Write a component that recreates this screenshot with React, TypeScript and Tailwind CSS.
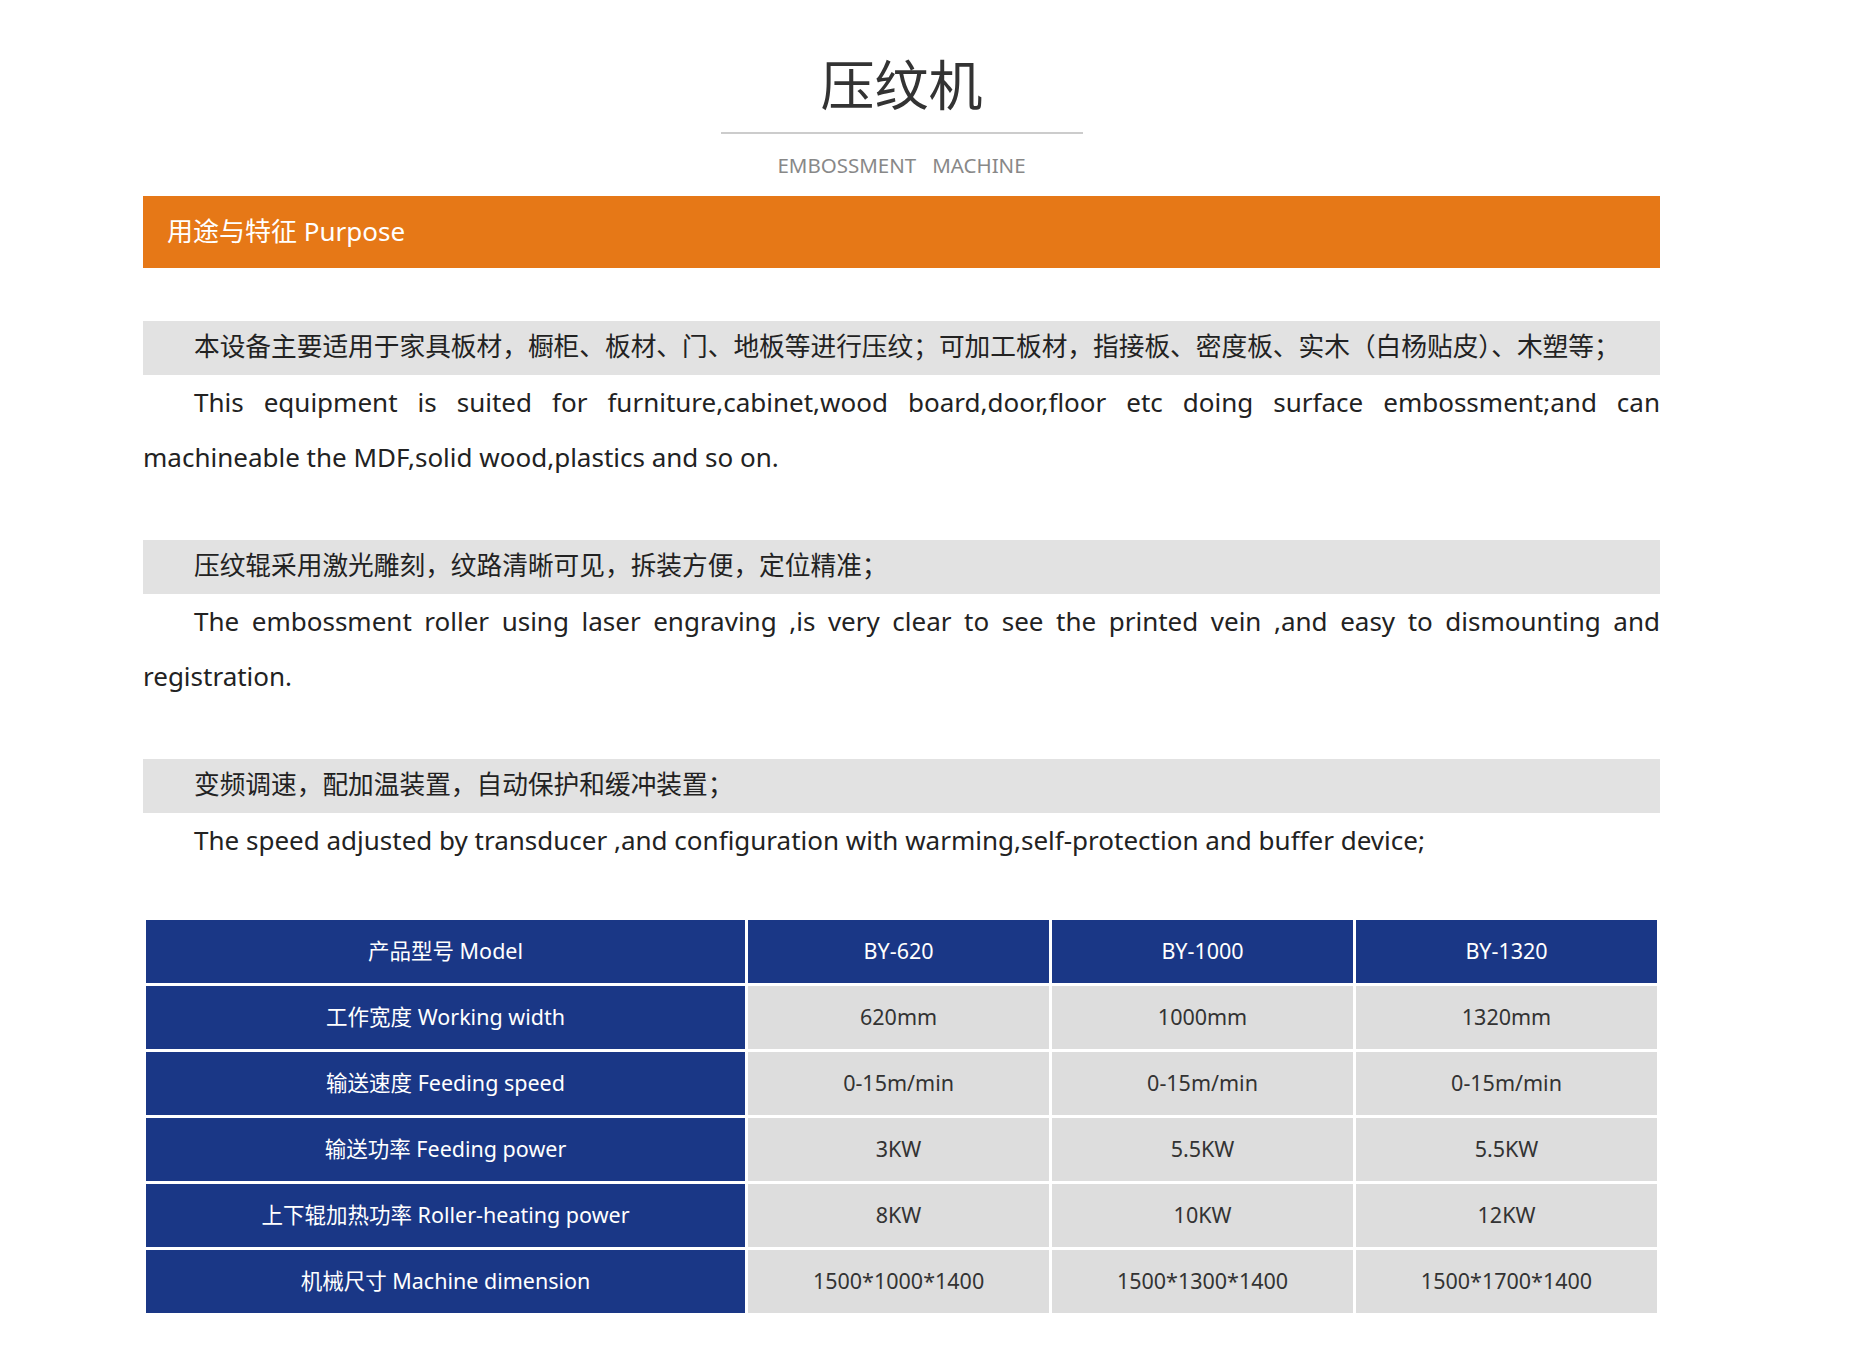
export default function App() {
  const font = { fontFamily: '"Noto Sans", "Noto Sans CJK SC", sans-serif' };
  const blocks = [
    {
      cn: "本设备主要适用于家具板材，橱柜、板材、门、地板等进行压纹；可加工板材，指接板、密度板、实木（白杨贴皮）、木塑等；",
      en: "This equipment is suited for furniture,cabinet,wood board,door,floor etc doing surface embossment;and can machineable the MDF,solid wood,plastics and so on.",
    },
    {
      cn: "压纹辊采用激光雕刻，纹路清晰可见，拆装方便，定位精准；",
      en: "The embossment roller using laser engraving ,is very clear to see the printed vein ,and easy to dismounting and registration.",
    },
    {
      cn: "变频调速，配加温装置，自动保护和缓冲装置；",
      en: "The speed adjusted by transducer ,and configuration with warming,self-protection and buffer device;",
    },
  ];
  const rows = [
    ["产品型号 Model", "BY-620", "BY-1000", "BY-1320"],
    ["工作宽度 Working width", "620mm", "1000mm", "1320mm"],
    ["输送速度 Feeding speed", "0-15m/min", "0-15m/min", "0-15m/min"],
    ["输送功率 Feeding power", "3KW", "5.5KW", "5.5KW"],
    ["上下辊加热功率 Roller-heating power", "8KW", "10KW", "12KW"],
    ["机械尺寸 Machine dimension", "1500*1000*1400", "1500*1300*1400", "1500*1700*1400"],
  ];
  return (
    <div className="w-[1855px] min-h-[1356px] bg-white" style={font}>
      <div className="ml-[143px] w-[1517px]">
        <div className="pt-[51px] flex flex-col items-center">
          <div className="text-[54px] leading-[68px] text-[#333]">压纹机</div>
          <div className="mt-[13px] w-[362px] h-[2px] bg-[#cccccc]" />
          <div className="mt-[16px] text-[20.5px] text-[#888]">EMBOSSMENT&nbsp;&nbsp;&nbsp;MACHINE</div>
        </div>
        <div className="mt-[15px] h-[72px] bg-[#e67817] flex items-center pl-[24px] text-white text-[26px]">
          用途与特征 Purpose
        </div>
        <div className="pt-[53px]">
          {blocks.map((b, i) => (
            <div key={i} className="mb-[55px]">
              <div className="h-[54px] bg-[#e2e2e2] flex items-center pl-[51px] text-[25.7px] text-[#222] whitespace-nowrap">{b.cn}</div>
              <p className="text-[26px] leading-[55px] text-[#222] indent-[51px] text-justify">{b.en}</p>
            </div>
          ))}
        </div>
        <table className="mt-[-6px] w-[1517px] border-separate border-spacing-[3px] text-[21.5px]">
          <tbody>
            {rows.map((r, i) => (
              <tr key={i}>
                {r.map((c, j) => (
                  <td
                    key={j}
                    className={`h-[63px] text-center ${j === 0 ? "w-[603px]" : "w-[302px]"} ${
                      i === 0 || j === 0 ? "bg-[#1a3786] text-white" : "bg-[#dddddd] text-[#333]"
                    }`}
                  >
                    {c}
                  </td>
                ))}
              </tr>
            ))}
          </tbody>
        </table>
      </div>
    </div>
  );
}
